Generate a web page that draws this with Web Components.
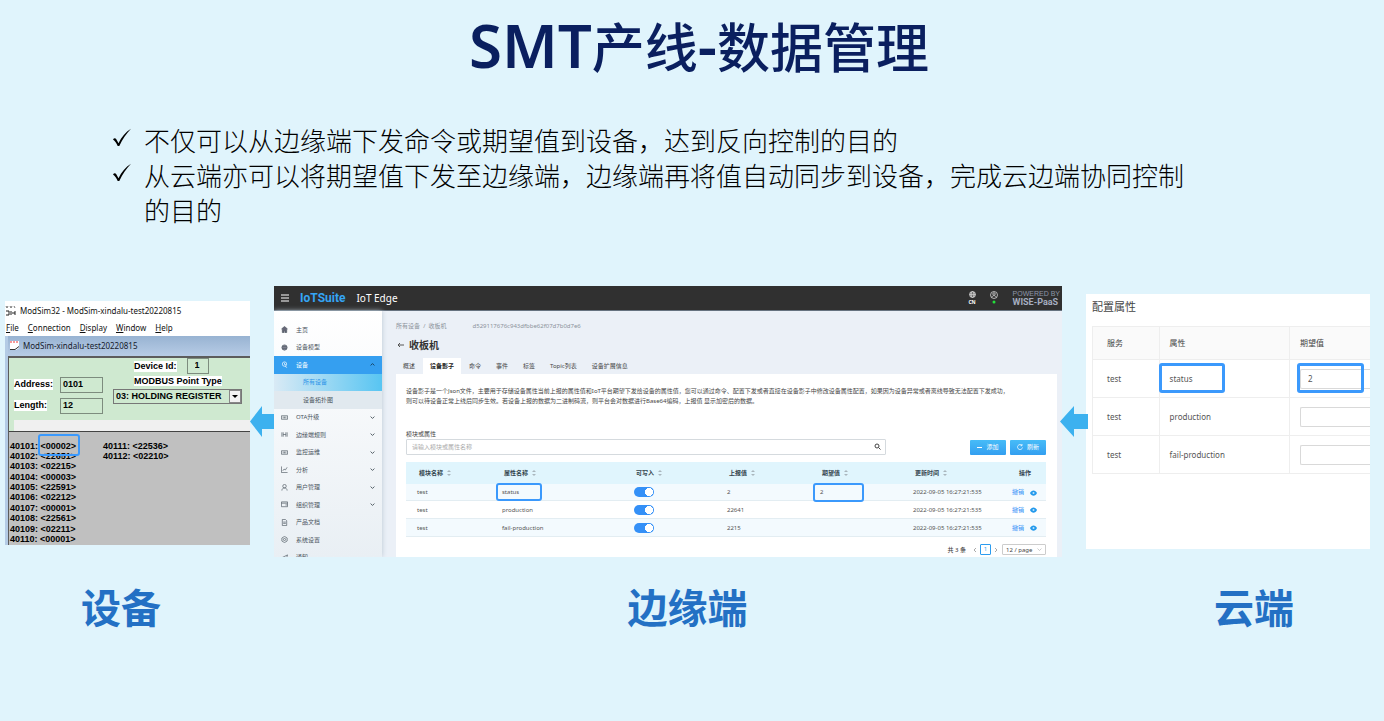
<!DOCTYPE html>
<html lang="zh-CN">
<head>
<meta charset="utf-8">
<title>SMT产线-数据管理</title>
<style>
body { margin: 0; background: #e0f4fc; font-family: "Noto Sans", "Noto Sans CJK SC", sans-serif; }
</style>
</head>
<body>
<data-slide></data-slide>
<script>
function define(name, html) {
  const template = document.createElement('template');
  template.innerHTML = '<style>*{box-sizing:border-box}input,button,select{font:inherit;color:inherit;margin:0}</style>' + html;
  customElements.define(name, class extends HTMLElement {
    constructor() {
      super();
      this.attachShadow({ mode: 'open' }).appendChild(template.content.cloneNode(true));
    }
  });
}

/* Rounded frame laid over the value that is being pointed out */
define('focus-frame', `
<style>:host{position:absolute;box-sizing:border-box;border:var(--frame,2px) solid #3b99fc;border-radius:3px;pointer-events:none}</style>`);

define('flow-arrow', `
<style>:host{display:flex;justify-content:center;align-self:center;position:relative;z-index:2}svg{display:block;flex:none;width:var(--arrow,28px);height:31px}</style>
<svg viewBox="0 0 28 31" preserveAspectRatio="none" aria-hidden="true"><path d="M0 15.500 14 0V8H28V23H14V31Z" fill="#3cb1ef"/></svg>`);

define('slide-heading', `
<style>:host{display:block}h1{margin:0;font-size:53px;line-height:60px;font-weight:500;color:#0a1f5f;text-align:center;font-family:"Noto Sans","Noto Sans CJK SC",sans-serif}::slotted(span){font-size:60px;line-height:40px;font-weight:600}</style>
<h1><slot></slot></h1>`);

define('check-point', `
<style>
:host{display:flex;font-size:26px;line-height:35px;font-weight:300;color:#000;font-family:"Noto Sans CJK SC",sans-serif}
svg{flex:none;width:20px;height:20px;margin:6px 12px 0 0}
</style>
<svg viewBox="0 0 20 20" aria-hidden="true"><path d="M1 11.500C2 10 3.500 10 4.300 11.300L6.500 15.300C9.500 9 13.500 4.300 19 .8C14.500 5.700 10.500 11 7.300 18H5.700C4.500 15.500 3 12.800 1 11.500Z"/></svg>
<span><slot></slot></span>`);

define('mod-sim', `
<style>
:host{display:block;height:244px;overflow:hidden;background:#fff;color:#111;font-size:8px;line-height:12px;margin-top:2px}
.bar{display:flex;align-items:center;gap:4px;height:20px}
svg{display:block;width:11px;height:11px}
nav{display:flex;gap:9px;height:15px;align-items:center;padding-left:1px}
nav a{color:inherit;text-decoration:none}nav a::first-letter{text-decoration:underline}
.child{border-left:3px solid #b4cbe5;background:#b4cbe5}
.child .bar{padding-left:1px;gap:3px;background:linear-gradient(#98b3d2,#b7cce6);color:#17202c}
.body{border:1px solid #5c5c5c;border-width:2px 0 2px 1px;background:#cfe9d0;font:bold 9px/12px "Liberation Sans",sans-serif;color:#000}
form{display:flex;height:62px;padding-left:5px}
.left{display:grid;grid-template-columns:46px 43px;grid-auto-rows:16px;gap:5px 0;padding-top:19px;align-items:center}
.right{flex:1;padding-left:10px;min-width:0}
.row{display:flex;gap:10px;height:17px;align-items:center;padding-left:21px}
label{background:#fff;justify-self:start;line-height:11px}
input{width:43px;height:16px;padding:0 2px 2px;background:#cfe9d0;border:1px solid #7d8c7e;border-radius:0}
.id{width:22px;padding-left:7px}
.type{padding-left:21px;height:14px}
.pick{position:relative;display:block;width:129px;max-width:100%}
select{appearance:none;display:block;width:100%;height:15px;padding:0 2px;background:#cfe9d0;border:1px solid #777;border-radius:0}
.pick i{position:absolute;right:1px;top:1px;width:12px;height:13px;background:#f2f2f2;border:1px solid #888}
.pick i::after{content:"";position:absolute;left:2px;top:4px;border:3px solid transparent;border-top-color:#000}
.status{height:11px;margin-left:5px;background:#f0f0f0}
.data{position:relative;height:115px;padding-top:9px;border-top:1px solid #444;background:#c0c0c0;overflow:hidden}
ol{list-style:none;margin:0;padding:0 0 0 1px;height:104px;display:grid;grid-auto-flow:column;grid-template-rows:repeat(10,1fr);grid-template-columns:93px auto;justify-content:start;line-height:10px}
focus-frame{left:29px;top:2px;width:42px;height:22px}
</style>
<div class="bar"><svg viewBox="0 0 11 11" aria-hidden="true"><path d="M1 1l1 2 1-2M5 1l1 2 1-2M9 1l1 2" stroke="#777" fill="none"/><path d="M1 6h3v4H1M6 6v4M7 8h3M10 6v4" stroke="#222" fill="none"/></svg><span>ModSim32 - ModSim-xindalu-test20220815</span></div>
<nav><a href="#">File</a><a href="#">Connection</a><a href="#">Display</a><a href="#">Window</a><a href="#">Help</a></nav>
<section class="child">
<div class="bar"><svg viewBox="0 0 11 11" aria-hidden="true"><path d="M1 1h9v7L7 10H1Z" fill="#fff"/><path d="M2 1v2M5 1v2M8 1v2" stroke="#e33"/><path d="M1 9.500h5l4-3" stroke="#333" fill="none"/></svg><span>ModSim-xindalu-test20220815</span></div>
<div class="body">
<form>
<div class="left"><label for="a">Address:</label><input id="a" value="0101"><label for="l">Length:</label><input id="l" value="12"></div>
<div class="right"><div class="row"><label for="d">Device Id:</label><input class="id" id="d" value="1"></div>
<div class="type"><label for="t">MODBUS Point Type</label></div>
<span class="pick"><select id="t"><option>03: HOLDING REGISTER</option></select><i></i></span></div>
</form>
<div class="status"></div>
<div class="data"><ol><li>40101: &lt;00002&gt;</li><li>40102: &lt;22651&gt;</li><li>40103: &lt;02215&gt;</li><li>40104: &lt;00003&gt;</li><li>40105: &lt;22591&gt;</li><li>40106: &lt;02212&gt;</li><li>40107: &lt;00001&gt;</li><li>40108: &lt;22561&gt;</li><li>40109: &lt;02211&gt;</li><li>40110: &lt;00001&gt;</li><li>40111: &lt;22536&gt;</li><li>40112: &lt;02210&gt;</li></ol><focus-frame></focus-frame></div>
</div></section>`);

define('top-bar', `
<style>
:host{display:flex;align-items:center;height:25px;padding:0 2px 0 7px;background:#303030;border-bottom:1px solid #66727f;color:#fff}
button{border:0;padding:0;background:none;display:block}svg{display:block}
.brand{margin-left:11px;color:#35a5f5;font:bold 12px/20px Roboto,"Liberation Sans",sans-serif}
.name{margin-left:11px;font-size:10px;line-height:20px}
.tools{margin-left:auto;display:flex;gap:13px;text-align:center;font-size:5px;line-height:6px;font-weight:bold}
.tools button{width:9px;height:15px;white-space:nowrap}
.tools svg{margin:0 auto 1px}
.powered{margin-left:14px;color:#8d96a8;font:7px/8px "Liberation Sans",sans-serif;white-space:nowrap}
.powered b{display:block;font:bold 9px/9px Roboto,sans-serif;color:#a5aec0}
</style>
<button aria-label="menu"><svg width="8" height="8" viewBox="0 0 8 8"><path d="M0 1h8M0 4h8M0 7h8" stroke="#fff" stroke-width="1.200"/></svg></button>
<span class="brand">IoTSuite</span><span class="name">IoT Edge</span>
<div class="tools"><button><svg width="7" height="7" viewBox="0 0 14 14"><g fill="none" stroke="#ddd" stroke-width="1.500"><circle cx="7" cy="7" r="6"/><ellipse cx="7" cy="7" rx="3" ry="6"/><path d="M1 7h12M2 4h10M2 10h10"/></g></svg>CN</button>
<button aria-label="account"><svg width="8" height="8" viewBox="0 0 16 16"><g fill="none" stroke="#ddd" stroke-width="1.500"><circle cx="8" cy="8" r="7"/><circle cx="8" cy="6" r="2.500"/><path d="M3.500 13c1-5 8-5 9 0"/></g></svg><svg width="4" height="4" viewBox="0 0 4 4"><circle cx="2" cy="2" r="1.500" fill="#22e03a"/></svg></button></div>
<div class="powered">POWERED BY<b>WISE-PaaS</b></div>`);

const sideIcons = {
  home: '<path d="M1 7 8 1l7 6M3 7v8h4v-5h2v5h4V7" fill="#667"/>',
  model: '<circle cx="8" cy="8" r="6" fill="#889"/><path d="M3 6h10M3 10h10"/>',
  device: '<circle cx="8" cy="7" r="5"/><path d="M8 4v4h3M9 12l5 3"/>',
  ota: '<path d="M1 4h14v8H1ZM5 6v4M8 6v4M11 6v4"/>',
  rule: '<path d="M2 3v10M5 3v10M11 3v10M14 3v10M5 8h6"/>',
  chart: '<path d="M1 1v14h14M4 11l3-4 3 2 4-6"/>',
  user: '<circle cx="8" cy="5" r="4"/><path d="M2 15c0-8 12-8 12 0"/>',
  org: '<path d="M1 2h14v11H1ZM1 5h14M10 9h5"/>',
  doc: '<path d="M3 1h7l3 3v11H3ZM5 7h6M5 10h6"/>',
  gear: '<path d="M8 1l6 3.500v7L8 15l-6-3.500v-7Z"/><circle cx="8" cy="8" r="2.500"/>',
  send: '<path d="M1 9 15 2 11 14 7 11Z"/>'
};
const sideItems = [
  ['home', '主页'], ['model', '设备模型'], ['device', '设备', 'up', 'on'], ['', '所有设备', '', 'sub here'], ['', '设备拓扑图', '', 'sub'],
  ['ota', 'OTA升级', 'down'], ['rule', '边缘端规则', 'down'], ['ota', '监控运维', 'down'], ['chart', '分析', 'down'],
  ['user', '用户管理', 'down'], ['org', '组织管理', 'down'], ['doc', '产品文档'], ['gear', '系统设置'], ['send', '通知']
];
define('side-menu', `
<style>
:host{display:block;padding-top:10px;overflow:hidden;background:linear-gradient(#fff,#e9eff4);box-shadow:0 0 5px #b9c6d2;z-index:1;font-size:6px;line-height:10px;color:#4b555e}
ul{list-style:none;margin:0;padding:0;height:245px;display:flex;flex-direction:column}
li{flex:1;display:flex}
a{flex:1;display:flex;align-items:center;padding:0 7px;color:inherit;text-decoration:none}
svg{width:7px;height:7px;fill:none;stroke:currentColor;stroke-width:1.500}
a>svg:first-child{margin-right:8px}
span{flex:1}.chev{width:5px;height:5px;stroke-width:3}
.on{background:#359ff0;color:#fff}
.on .chev{color:#17415f}
.sub{background:#e1e9ef}.sub a{padding-left:29px}
.here{background:linear-gradient(90deg,#d9eaf5,#58c5f2);color:#2b93e8}
</style>
<ul>${sideItems.map(([icon, text, chev, cls]) => `<li class="${cls || ''}"><a href="#">${icon ? `<svg viewBox="0 0 16 16">${sideIcons[icon]}</svg>` : ''}<span>${text}</span>${chev ? `<svg class="chev" viewBox="0 0 16 16"><path d="${chev === 'up' ? 'M2 11l6-6 6 6' : 'M2 5l6 6 6-6'}"/></svg>` : ''}</a></li>`).join('')}</ul>`);

const sorter = '<svg class="sort" viewBox="0 0 4 8"><path d="M0 3 2 1l2 2ZM0 5l2 2 2-2Z" fill="#a9b6bd"/></svg>';
const shadowRows = [['status', '2', '2'], ['production', '22641', ''], ['fail-production', '2215', '']];
define('shadow-table', `
<style>
:host{display:block;font-size:6px;line-height:10px;color:#555}
table{width:100%;height:75px;border-collapse:collapse;table-layout:fixed}
th,td{padding:0 0 0 11px;text-align:left;position:relative;white-space:nowrap}
th{height:22px;background:#e0f5fd;padding-left:13px;color:#33444d;font-weight:600}
th:last-child{padding-left:18px}
td{border-bottom:1px solid #e3edf2}
tbody tr:nth-child(odd){background:#f3fafe}
.sort{width:4px;height:8px;margin-left:4px;vertical-align:middle}
input{appearance:none;display:block;width:20px;height:10px;border-radius:5px;background:radial-gradient(circle at 15px 5px,#fff 0 4px,#3490f7 4px)}
a{color:#3490f7;text-decoration:none}
.eye{width:7px;height:6px;vertical-align:middle;margin-left:6px}
.name{left:5px;top:-1px;width:46px;height:18px}
.want{left:4px;top:-1px;width:51px;height:19px}
.c1{width:85px}.c2{width:132px}.c3{width:93px}.c4{width:99px}.c5{width:45px}
</style>
<table><colgroup><col class="c1"><col class="c2"><col class="c3"><col class="c3"><col class="c3"><col class="c4"><col class="c5"></colgroup>
<thead><tr>${['模块名称', '属性名称', '可写入', '上报值', '期望值', '更新时间'].map(t => `<th>${t}${sorter}</th>`).join('')}<th>操作</th></tr></thead>
<tbody>${shadowRows.map(([name, value, want], i) => `<tr><td>test</td><td>${name}${i ? '' : '<focus-frame class="name"></focus-frame>'}</td><td><input type="checkbox" checked aria-label="可写入"></td><td>${value}</td><td>${want}${i ? '' : '<focus-frame class="want"></focus-frame>'}</td><td>2022-09-05 16:27:21:535</td><td><a href="#">撤销<svg class="eye" viewBox="0 0 14 12"><path d="M0 6C3-1 11-1 14 6 11 13 3 13 0 6Z" fill="#2299ec"/><circle cx="7" cy="6" r="2" fill="#bfe3fa"/></svg></a></td></tr>`).join('')}</tbody></table>`);

define('shadow-view', `
<style>
:host{display:flex;flex-direction:column;min-width:0;padding:10px 5px 0 14px;background:#ebf0f7;font-size:6px;line-height:10px;color:#444}
.crumbs{display:flex;color:#8b939b}.crumbs span{margin-left:26px}a{color:inherit;text-decoration:none}
.title{display:flex;align-items:center;gap:5px;height:18px;margin:5px 0 4px 1px}
h2{margin:0;font-size:10px;line-height:18px;font-weight:600;color:#333}
.tabs{display:flex;gap:1px;height:16px}
.tabs button{border:0;padding:0 7px;background:none;line-height:16px}
.tabs .on{background:#fff;font-weight:600;color:#222}
.card{flex:1;background:#fff;padding:12px 11px 0 10px}
p{margin:0 0 23px;white-space:nowrap}
label{display:block;height:10px}
.find{display:flex;align-items:center;gap:4px;margin-bottom:7px}
.box{flex:0 1 480px;position:relative}
.box input{display:block;width:100%;height:16px;padding:0 5px;border:1px solid #d5dade;border-radius:1px;background:#fff}
input::placeholder{color:#aaa;opacity:1}
.box svg{position:absolute;right:5px;top:4px}
.find button{width:36px;height:15px;border:0;border-radius:1px;padding:0;background:linear-gradient(#47bcf8,#339ff0);color:#fff;display:flex;align-items:center;justify-content:center;gap:4px}
.find .add{margin-left:auto}
.pages{display:flex;justify-content:flex-end;align-items:center;gap:4px;margin-top:7px;height:11px}
.pages b{font-weight:500;margin-right:3px}
.pages button{border:0;background:none;padding:0;width:3px}
.pages button svg{display:block}
.pages .cur{width:11px;height:11px;border:1px solid #2b9cf0;border-radius:1px;color:#2b9cf0;line-height:9px}
.size{position:relative;width:44px}
select{appearance:none;display:block;width:100%;height:11px;border:1px solid #ccc;border-radius:1px;padding:0 3px;background:#fff}
.size svg{position:absolute;right:4px;top:3px}
</style>
<div class="crumbs"><a href="#">所有设备</a>&nbsp;&nbsp;/&nbsp;&nbsp;<a href="#">收板机</a><span>d529117676c943dfbbe62f07d7b0d7e6</span></div>
<div class="title"><svg width="7" height="6" viewBox="0 0 7 6"><path d="M7 3H1M3 1 1 3l2 2" stroke="#555" fill="none"/></svg><h2>收板机</h2></div>
<div class="tabs"><button>概述</button><button class="on">设备影子</button><button>命令</button><button>事件</button><button>标签</button><button>Topic列表</button><button>设备扩展信息</button></div>
<div class="card">
<p>设备影子是一个Json文件，主要用于存储设备属性当前上报的属性值和IoT平台期望下发给设备的属性值，您可以通过命令、配置下发或者直接在设备影子中修改设备属性配置，如果因为设备异常或者离线导致无法配置下发成功，<br>则可以待设备正常上线后同步生效。若设备上报的数据为二进制码流，则平台会对数据进行Base64编码，上报值 显示加密后的数据。</p>
<label for="q">模块或属性</label>
<div class="find"><div class="box"><input id="q" placeholder="请输入模块或属性名称"><svg width="7" height="7" viewBox="0 0 14 14"><g fill="none" stroke="#444" stroke-width="2"><circle cx="6" cy="6" r="4"/><path d="m9 9 4 4"/></g></svg></div>
<button class="add"><svg width="5" height="5" viewBox="0 0 5 5"><path d="M0 2.500h5" stroke="#fff"/></svg>添加</button>
<button><svg width="6" height="6" viewBox="0 0 12 12"><path d="M10 3A5 5 0 1 0 11 7M10 0v3.500H7" fill="none" stroke="#fff" stroke-width="1.500"/></svg>刷新</button></div>
<shadow-table></shadow-table>
<div class="pages"><b>共 3 条</b><button aria-label="previous"><svg width="3" height="6" viewBox="0 0 3 6"><path d="M3 1 1 3l2 2" stroke="#aaa" fill="none"/></svg></button><button class="cur">1</button><button aria-label="next"><svg width="3" height="6" viewBox="0 0 3 6"><path d="m0 1 2 2-2 2" stroke="#aaa" fill="none"/></svg></button><span class="size"><select aria-label="page size"><option>12 / page</option></select><svg width="5" height="5" viewBox="0 0 10 10"><path d="m1 3 4 4 4-4" stroke="#999" fill="none"/></svg></span></div>
</div>`);

define('edge-console', `
<style>:host{display:flex;flex-direction:column;height:271px;overflow:hidden}
main{flex:1;min-height:0;display:grid;grid-template-columns:108px minmax(0,1fr)}</style>
<top-bar></top-bar><main><side-menu></side-menu><shadow-view></shadow-view></main>`);

define('cloud-panel', `
<style>
:host{display:block;height:255px;overflow:hidden;padding:3px 0 0 6px;background:#fff;color:#555;font-size:8px;line-height:12px}
h2{margin:0 0 9px;font-size:11px;line-height:20px;font-weight:400;color:#444}
table{width:100%;border-collapse:collapse;table-layout:fixed}
th,td{position:relative;height:38px;padding:0 0 0 10px;text-align:left;font-weight:400;border:1px solid #eee;border-right:0}
th{height:33px;background:#fafafa;color:#444}
th:first-child,td:first-child{padding-left:14px}
input{display:block;width:100%;height:20px;padding:0 7px;border:1px solid #d9d9d9;border-right:0;border-radius:2px 0 0 2px;background:#fff}
focus-frame{--frame:3px;height:30px;top:3px}
.a{left:-1px;width:66px}.b{left:7px;width:67px}
</style>
<h2>配置属性</h2>
<table><colgroup><col style="width:24%"><col style="width:47%"><col></colgroup>
<thead><tr><th>服务</th><th>属性</th><th>期望值</th></tr></thead>
<tbody><tr><td>test</td><td>status<focus-frame class="a"></focus-frame></td><td><input aria-label="status" value="2"><focus-frame class="b"></focus-frame></td></tr>
<tr><td>test</td><td>production</td><td><input aria-label="production"></td></tr>
<tr><td>test</td><td>fail-production</td><td><input aria-label="fail-production"></td></tr></tbody></table>`);

define('data-slide', `
<style>
:host{display:block;padding:18px 0 40px}
slide-heading{margin:0 0 44px 14px}
.points{padding:0 180px 0 112px}
.flow{display:grid;grid-template-columns:245fr 24px 788fr 24px 284fr;align-items:center;padding:0 14px 0 5px;margin-top:59px}
.flow>*{min-width:0}
.short{--arrow:24px}
.names{display:flex;justify-content:space-between;margin-top:21px;padding:0 90px 0 81px;font-size:40px;line-height:60px;font-weight:700;color:#2370c4}
</style>
<slide-heading><span>SMT</span>产线<span>-</span>数据管理</slide-heading>
<div class="points"><check-point>不仅可以从边缘端下发命令或期望值到设备，达到反向控制的目的</check-point><check-point>从云端亦可以将期望值下发至边缘端，边缘端再将值自动同步到设备，完成云边端协同控制的目的</check-point></div>
<div class="flow"><mod-sim></mod-sim><flow-arrow class="short"></flow-arrow><edge-console></edge-console><flow-arrow></flow-arrow><cloud-panel></cloud-panel></div>
<div class="names"><span>设备</span><span>边缘端</span><span>云端</span></div>`);
</script>
</body>
</html>
